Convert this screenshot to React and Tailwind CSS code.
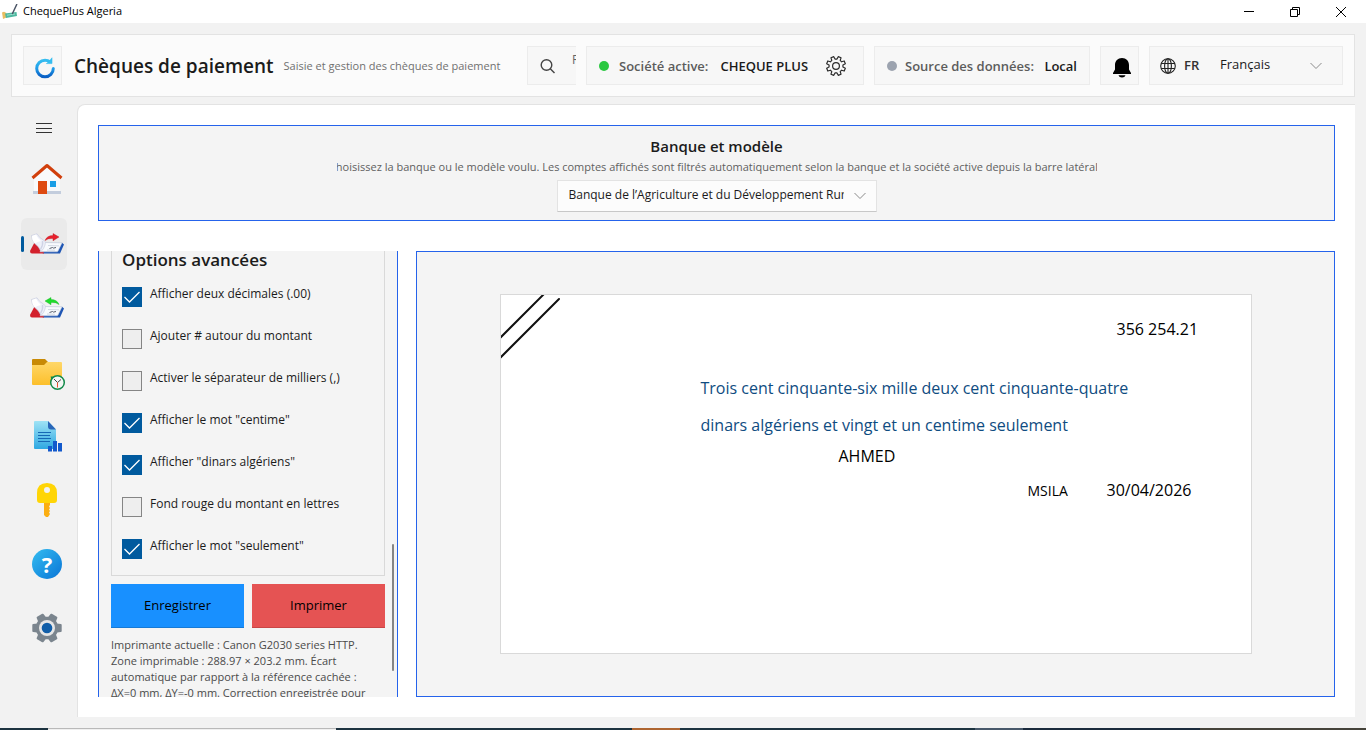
import React, { useState } from 'react';

const polar = (r, deg) => {
    const a = (deg * Math.PI) / 180;
    return `${(r * Math.cos(a)).toFixed(2)} ${(r * Math.sin(a)).toFixed(2)}`;
};

const cogPath = (teeth, outer, inner, offset) => {
    const step = 360 / teeth;
    const points = [];
    for (let i = 0; i < teeth; i++) {
        const a = i * step + offset;
        points.push(polar(inner, a - step * 0.32), polar(outer, a - step * 0.2));
        points.push(polar(outer, a + step * 0.2), polar(inner, a + step * 0.32));
    }
    return `M${points.join('L')}Z`;
};

const LogoIcon = () => (
    <svg width="16" height="16" viewBox="0 0 16 16">
        <path d="M0 8.500l2-.8 2.500 1.300v4.500L1 15z" fill="#e9bd62" />
        <path d="M3 9.500L14.500 8l.5 4L4 14z" fill="#4fb8a0" />
        <path d="M5 11.200l8-1.200" stroke="#9be0cf" />
        <path d="M14.700.5L10.500 9.500" stroke="#4c5566" strokeWidth="1.500" strokeLinecap="round" />
    </svg>
);

const RefreshIcon = () => (
    <svg width="22" height="22" viewBox="0 0 22 22" fill="none">
        <defs>
            <linearGradient id="refresh" x1="0" y1="0" x2="0" y2="1">
                <stop offset="0" stopColor="#35bdf0" />
                <stop offset=".5" stopColor="#1f9be8" />
                <stop offset="1" stopColor="#0a5fc4" />
            </linearGradient>
        </defs>
        <path d="M19.300 11.500A8.300 8.300 0 1 1 11 3.200q3 0 5 1.500" stroke="url(#refresh)" strokeWidth="3" strokeLinecap="round" />
        <path d="M18 .8v5.800h-5.600l2.600-2.200z" fill="#35bdf0" stroke="#35bdf0" strokeWidth=".6" />
    </svg>
);

const SearchIcon = () => (
    <svg width="16" height="16" viewBox="0 0 16 16" fill="none" stroke="#444" strokeWidth="1.400">
        <circle cx="6.500" cy="7" r="5.300" />
        <path d="M10.300 10.800L14.500 15" />
    </svg>
);

const CogOutline = () => (
    <svg width="22" height="22" viewBox="-11 -11 22 22" fill="none" stroke="#2b2b2b" strokeWidth="1.200" strokeLinejoin="round">
        <path d={cogPath(8, 9.6, 7, 22.5)} />
        <circle r="3.400" />
    </svg>
);

const BellIcon = () => (
    <svg width="18" height="20" viewBox="0 0 18 20">
        <path d="M9 0c4.200 0 7 3 7 7v4.500l2 3.500v1H0v-1l2-3.500V7c0-4 2.800-7 7-7z" />
        <path d="M5.500 17.300h7c-.6 1.400-1.800 2.200-3.500 2.200s-2.900-.8-3.500-2.200z" />
    </svg>
);

const GlobeIcon = () => (
    <svg width="16" height="16" viewBox="0 0 16 16" fill="none" stroke="#222" strokeWidth="1.100">
        <circle cx="8" cy="8" r="7.300" />
        <ellipse cx="8" cy="8" rx="3.400" ry="7.300" />
        <path d="M1.200 5.500h13.600M1.200 10.500h13.600M8 .7v14.600" />
    </svg>
);

const Chevron = () => (
    <svg width="12" height="8" viewBox="0 0 12 8" fill="none" stroke="#8a8a8a" className="shrink-0">
        <path d="M.5 1L6 6.500 11.500 1" />
    </svg>
);

const HomeIcon = () => (
    <svg width="32" height="34" viewBox="0 0 32 34">
        <path d="M3 13L16 2l13 11v18H3z" fill="#f9fafb" />
        <path d="M2 28h28v3H2z" fill="#c3cddd" />
        <path d="M7 18h9v13H7z" fill="#de4a10" />
        <path d="M19 18h6v6h-6z" fill="#1b9fe6" />
        <path d="M1.500 15L16 2.500 30.500 15" fill="none" stroke="#d13f0c" strokeWidth="3" strokeLinejoin="round" />
    </svg>
);

const ChequeBookIcon = ({ incoming }) => (
    <svg width="36" height="22" viewBox="0 0 36 22">
        <path d="M11 18l3 2.500h17L35 11.500l-2-1.800-4 8.300z" fill="#1f56b4" />
        <path d="M1 18l4.500-8.500L14 17l1 3.500H3q-2 0-2-2.500z" fill="#d3202c" />
        <path d="M15 9.500l18 .3-4.500 9H11z" fill="#f8fafd" stroke="#b5c0d4" strokeWidth=".6" />
        <path d="M19 12.500l11 .4M18 17l8 .2" stroke="#c2cad8" strokeWidth=".7" />
        <path d="M20.500 15.500l3-1 1 .6 2.500-.6" fill="none" stroke="#444c5c" strokeWidth=".9" />
        <path d="M2.500 2.500L8 .8q2.500 4.500 6.500 6.200 3 1.500 1.500 5-1 4-4 6.500-2-5-6.500-8.300Q2.500 7 2.500 2.500z" fill="#eef0f8" stroke="#c3c7dc" strokeWidth=".6" />
        <path d="M3 3l4-1.500q2 4.500 5 6.500-4 .5-6 2.500Q3 7.500 3 3z" fill="#fff" />
        <path d="M13.500 8q.8 4-2 8.500" fill="none" stroke="#cfd3e6" strokeWidth="1.400" />
        {incoming ? (
            <path d="M16 4l6-3.500V2.500q6 0 8 5-3-2.500-8-2v2.300z" fill="#1fdc2c" stroke="#14b322" strokeWidth=".4" />
        ) : (
            <path d="M30 4l-6-3.500V2.500q-6 0-8 5 3-2.500 8-2v2.300z" fill="#e8212d" stroke="#b81822" strokeWidth=".4" />
        )}
    </svg>
);

const FolderIcon = () => (
    <svg width="37" height="37" viewBox="-3 -5 37 37">
        <defs>
            <linearGradient id="folder" x1="0" y1="0" x2="0" y2="1">
                <stop offset="0" stopColor="#ffd768" />
                <stop offset="1" stopColor="#fcbf2b" />
            </linearGradient>
        </defs>
        <path d="M0 1q0-1 1-1h12l3 3-3 4H0z" fill="#c88a06" />
        <path d="M0 6h12l3-3h14q1 0 1 1v21q0 1-1 1H1q-1 0-1-1z" fill="url(#folder)" />
        <circle cx="25.500" cy="23.500" r="6.800" fill="#f4f6f4" stroke="#138a4a" strokeWidth="1.500" />
        <path d="M22 20l3.500 3.500L29 20.500" fill="none" stroke="#444" />
        <path d="M25.500 23.500v5" stroke="#e8502c" />
        <path d="M18.700 17.500h3.500l-3 3.500z" fill="#138a4a" />
    </svg>
);

const ReportIcon = () => (
    <svg width="30" height="32" viewBox="-2 -1 30 32">
        <defs>
            <linearGradient id="sheet" x1="0" y1="0" x2="0" y2="1">
                <stop offset="0" stopColor="#9fe3f5" />
                <stop offset="1" stopColor="#2ea8e2" />
            </linearGradient>
        </defs>
        <path d="M1 0h13l8 8.500V28H1q-1 0-1-1V1q0-1 1-1z" fill="url(#sheet)" />
        <path d="M14 0l8 8.500h-5q-3 0-3-3z" fill="#2a66b8" />
        <path d="M4 11.500h13M4 14.500h12M4 17.500h13M4 20.500h12" stroke="#1668b5" />
        <path d="M14 25h4v5.500h-4zM19 20h4v10.500h-4zM24 22h4v8.500h-4z" fill="#1259cc" />
    </svg>
);

const KeyIcon = () => (
    <svg width="20" height="34" viewBox="0 0 20 34">
        <path d="M7 18h6v4l-1 1.500 1 1.500-1 1.500 1 1.500-1 1.500 1 1.500-2 3H9l-2-2z" fill="#fbae12" />
        <path d="M10 0q10 0 10 10v7q0 3-3 3H3q-3 0-3-3v-7Q0 0 10 0zm0 4a3 3 0 1 0 0 6 3 3 0 0 0 0-6z" fill="#ffd506" />
    </svg>
);

const HelpIcon = () => (
    <span className="flex h-[30px] w-[30px] items-center justify-center rounded-full bg-linear-to-br from-[#35bdf0] to-[#0c74d6] text-[22px] font-bold text-white">
        ?
    </span>
);

const SettingsIcon = () => (
    <svg width="30" height="30" viewBox="-15 -15 30 30">
        <path d={cogPath(6, 14, 10.5, 0)} fill="#7b858e" stroke="#7b858e" strokeWidth="2" strokeLinejoin="round" />
        <circle r="8" fill="#e6e6e6" />
        <circle r="5.300" fill="#115ea8" />
    </svg>
);

const navItems = [
    { label: 'Accueil', icon: <HomeIcon /> },
    { label: 'Chèques de paiement', icon: <ChequeBookIcon />, active: true },
    { label: 'Chèques reçus', icon: <ChequeBookIcon incoming /> },
    { label: 'Historique', icon: <FolderIcon /> },
    { label: 'Rapports', icon: <ReportIcon /> },
    { label: 'Licence', icon: <KeyIcon /> },
    { label: 'Aide', icon: <HelpIcon /> },
    { label: 'Paramètres', icon: <SettingsIcon /> },
];

const initialOptions = [
    { id: 'decimals', label: 'Afficher deux décimales (.00)', checked: true },
    { id: 'hash', label: 'Ajouter # autour du montant', checked: false },
    { id: 'thousands', label: 'Activer le séparateur de milliers (,)', checked: false },
    { id: 'centime', label: 'Afficher le mot "centime"', checked: true },
    { id: 'dinars', label: 'Afficher "dinars algériens"', checked: true },
    { id: 'red', label: 'Fond rouge du montant en lettres', checked: false },
    { id: 'only', label: 'Afficher le mot "seulement"', checked: true },
];

const TitleBar = () => (
    <div className="flex h-[23px] shrink-0 items-center bg-white px-0.5 text-black">
        <LogoIcon />
        <span className="ml-[5px] flex-1 text-[11px]">ChequePlus Algeria</span>
        <button aria-label="Réduire" className="flex h-full w-[46px] items-center justify-center">
            <svg width="10" height="10" stroke="#000"><path d="M0 4.500h10" /></svg>
        </button>
        <button aria-label="Restaurer" className="flex h-full w-[46px] items-center justify-center">
            <svg width="10" height="10" fill="none" stroke="#000"><path d="M.5 2.500h7v7h-7zM2.500 2.500v-2h7v7h-2" /></svg>
        </button>
        <button aria-label="Fermer" className="flex h-full w-[46px] items-center justify-center">
            <svg width="10" height="10" stroke="#000"><path d="M0 0l10 10M10 0L0 10" /></svg>
        </button>
    </div>
);

const Header = () => (
    <header className="mx-[11px] mt-[11px] flex shrink-0 items-center gap-2.5 border border-[#e3e3e3] bg-[#fbfbfb] p-[11px]">
        <button aria-label="Actualiser" className="flex h-[39px] w-[39px] shrink-0 items-center justify-center border border-[#ececec] bg-[#f7f7f7] pt-1 pl-1">
            <RefreshIcon />
        </button>
        <div className="flex min-w-0 flex-1 items-center gap-2.5 pt-0.5 pl-0.5 whitespace-nowrap">
            <h1 className="text-[19px] font-semibold text-[#1b1b1b]">Chèques de paiement</h1>
            <p className="text-[11px] text-[#707070]">Saisie et gestion des chèques de paiement</p>
        </div>
        <label className="flex h-[39px] w-[49px] shrink-0 items-center gap-4 overflow-hidden border border-r-0 border-[#ececec] bg-[#f7f7f7] pl-3">
            <span className="shrink-0"><SearchIcon /></span>
            <input aria-label="Rechercher" placeholder="Rechercher" className="w-40 shrink-0 pb-3 text-[12px] outline-none placeholder:text-[#666]" />
        </label>
        <div className="flex h-[39px] w-[278px] shrink-0 items-center border border-[#ececec] bg-[#f7f7f7] px-3 text-[13px] font-semibold whitespace-nowrap">
            <span className="h-2.5 w-2.5 rounded-full bg-[#2ac840]" />
            <span className="ml-2.5 pt-0.5 text-[#5c5c5c]">Société active:</span>
            <span className="ml-3 flex-1 pt-0.5 text-[#1b1b1b]">CHEQUE PLUS</span>
            <button aria-label="Paramètres de la société" className="mr-1"><CogOutline /></button>
        </div>
        <div className="flex h-[39px] w-[216px] shrink-0 items-center border border-[#ececec] bg-[#f7f7f7] px-3 text-[13px] font-semibold whitespace-nowrap">
            <span className="h-2.5 w-2.5 rounded-full bg-[#9ca3af]" />
            <span className="ml-2 flex-1 pt-0.5 text-[#5c5c5c]">Source des données:</span>
            <span className="pt-0.5 text-[#1b1b1b]">Local</span>
        </div>
        <button aria-label="Notifications" className="flex h-[39px] w-[39px] shrink-0 items-center justify-center border border-[#ececec] bg-[#f7f7f7] pt-1 pl-1">
            <BellIcon />
        </button>
        <div className="flex h-[39px] w-[194px] shrink-0 items-center border border-[#ececec] bg-[#f7f7f7] pr-5 pl-2.5">
            <GlobeIcon />
            <span className="ml-2 w-9 text-[13px] font-semibold text-[#333]">FR</span>
            <select aria-label="Langue" className="flex-1 appearance-none pb-0.5 text-[13px] text-[#1b1b1b]">
                <option>Français</option>
            </select>
            <Chevron />
        </div>
    </header>
);

const Sidebar = () => (
    <nav className="flex w-[77px] shrink-0 flex-col">
        <button aria-label="Menu" className="ml-5 flex h-[48px] w-[48px] items-center justify-center">
            <svg width="16" height="12" stroke="#333"><path d="M0 1.500h16M0 6.500h16M0 10.500h16" /></svg>
        </button>
        <ul className="mt-0.5 ml-[21px] flex flex-col gap-3">
            {navItems.map((item) => (
                <li key={item.label}>
                    <button
                        aria-label={item.label}
                        className={`relative flex h-[52px] w-[46px] items-center justify-center rounded-md pl-1.5 ${item.active ? 'bg-[#eaeaea]' : ''}`}
                    >
                        {item.active && <span className="absolute top-[18px] left-0 h-4 w-[3px] rounded-full bg-[#005a9e]" />}
                        {item.icon}
                    </button>
                </li>
            ))}
        </ul>
    </nav>
);

const BankPanel = () => (
    <section className="flex h-24 shrink-0 flex-col items-center border border-[#2563eb] bg-[#f4f4f4] pt-2.5">
        <h2 className="text-[15px] leading-5 font-semibold text-[#1b1b1b]">Banque et modèle</h2>
        <p className="flex w-[760px] max-w-full justify-center overflow-hidden pt-0.5 text-[11px] leading-[18px] whitespace-nowrap text-[#5f5f5f]">
            Choisissez la banque ou le modèle voulu. Les comptes affichés sont filtrés automatiquement selon la banque et la société active depuis la barre latérale
        </p>
        <div className="mt-1 flex h-8 w-80 items-center border border-[#e3e3e3] border-b-[#c8c8c8] bg-[#fcfcfc] pr-2.5 pl-[11px]">
            <select aria-label="Banque" className="w-0 flex-1 appearance-none overflow-hidden pb-0.5 text-[12px] text-[#1b1b1b]">
                <option>Banque de l’Agriculture et du Développement Rural</option>
            </select>
            <span className="pl-2.5"><Chevron /></span>
        </div>
    </section>
);

const OptionRow = ({ option, onToggle }) => (
    <label className="flex h-[42px] items-center gap-2">
        <span className="grid h-5 w-5 shrink-0">
            <input
                type="checkbox"
                checked={option.checked}
                onChange={() => onToggle(option.id)}
                className="col-start-1 row-start-1 h-5 w-5 appearance-none border border-[#858585] bg-[#eeeeee] checked:border-[#005a9e] checked:bg-[#005a9e]"
            />
            {option.checked && (
                <svg viewBox="0 0 20 20" fill="none" stroke="#fff" strokeWidth="1.300" className="pointer-events-none col-start-1 row-start-1">
                    <path d="M2.500 10l5 5L17.500 5" />
                </svg>
            )}
        </span>
        <span className="pb-1.5 text-[12px] whitespace-nowrap text-[#1b1b1b]">{option.label}</span>
    </label>
);

const OptionsPanel = () => {
    const [options, setOptions] = useState(initialOptions);

    const toggle = (id) => {
        setOptions(options.map((o) => (o.id === id ? { ...o, checked: !o.checked } : o)));
    };

    return (
        <section className="relative w-[300px] shrink-0 overflow-hidden border-x border-[#2563eb] bg-[#f4f4f4] px-3">
            <div className="border border-t-0 border-[#d9d9d9] px-2.5 pb-[5px]">
                <h2 className="mb-[7px] text-[17px] leading-[18px] font-semibold text-[#1b1b1b]">Options avancées</h2>
                {options.map((option) => (
                    <OptionRow key={option.id} option={option} onToggle={toggle} />
                ))}
            </div>
            <div className="mt-2 grid grid-cols-2 gap-2 text-[13px] text-black">
                <button className="h-11 border-b border-[#167ad6] bg-[#1890ff]">Enregistrer</button>
                <button className="h-11 border-b border-[#c94646] bg-[#e55353]">Imprimer</button>
            </div>
            <p className="mt-[9px] text-[11px] leading-4 whitespace-nowrap text-[#4a4a4a]">
                Imprimante actuelle : Canon G2030 series HTTP.<br />
                Zone imprimable : 288.97 × 203.2 mm. Écart<br />
                automatique par rapport à la référence cachée :<br />
                ΔX=0 mm, ΔY=-0 mm. Correction enregistrée pour
            </p>
            <span className="absolute right-[3px] bottom-[26px] h-[127px] w-0.5 rounded-full bg-[#858585]" />
        </section>
    );
};

const ChequePreview = () => (
    <section className="flex min-w-0 flex-1 items-center justify-center border border-[#2563eb] bg-[#f4f4f4]">
        {/* fields are placed freely on the cheque */}
        <div className="relative h-[360px] w-[752px] overflow-hidden border border-[#d9d9d9] bg-white text-[16px] leading-6 whitespace-nowrap text-black">
            <svg width="64" height="64" stroke="#111" strokeWidth="2" strokeLinecap="round" className="absolute top-0 left-0">
                <path d="M-1 43L43-1M-1 63L58 4" />
            </svg>
            <span className="absolute top-[22px] left-[616px]">356 254.21</span>
            <p className="absolute top-[75px] left-[200px] leading-[37px] text-[#0f4c81]">
                Trois cent cinquante-six mille deux cent cinquante-quatre<br />
                dinars algériens et vingt et un centime seulement
            </p>
            <span className="absolute top-[149px] left-[338px]">AHMED</span>
            <span className="absolute top-[184px] left-[527px] text-[14px]">MSILA</span>
            <span className="absolute top-[183px] left-[606px]">30/04/2026</span>
        </div>
    </section>
);

const Taskbar = () => (
    <div className="mt-[11px] flex h-0.5 shrink-0 bg-[#1d3340]">
        <span className="w-12" />
        <span className="w-72 border-t border-[#b9b9b9] bg-[#f0f0f0]" />
        <span className="w-[296px]" />
        <span className="w-12 bg-[#ae6530]" />
        <span className="w-[295px]" />
        <span className="w-12 bg-[#48586a]" />
        <span className="w-[177px] bg-[#1a2a3c]" />
        <span className="flex-1 bg-[#45433a]" />
    </div>
);

const App = () => (
    <div className="flex h-screen flex-col overflow-hidden bg-[#f2f2f2] font-['Open_Sans','Noto_Sans',sans-serif]">
        <TitleBar />
        <Header />
        <div className="mt-[7px] flex min-h-0 flex-1">
            <Sidebar />
            <main className="mr-[11px] flex min-w-0 flex-1 flex-col gap-[30px] rounded-tl-lg border-t border-l border-[#e3e3e3] bg-white p-5">
                <BankPanel />
                <div className="flex min-h-0 flex-1 gap-[18px]">
                    <OptionsPanel />
                    <ChequePreview />
                </div>
            </main>
        </div>
        <Taskbar />
    </div>
);

export default App;
